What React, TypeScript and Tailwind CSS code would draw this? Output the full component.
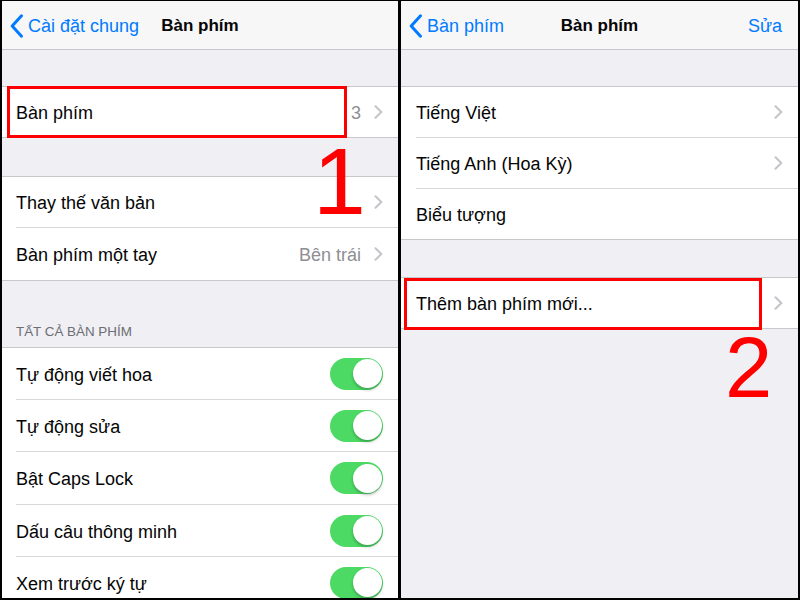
import React from "react";

const FONT = { fontFamily: '"Liberation Sans", Arial, sans-serif' };

function Chevron() {
  return (
    <svg width="9" height="14" viewBox="0 0 9 14" className="shrink-0">
      <path d="M1.5 1.2 L7.3 7 L1.5 12.8" fill="none" stroke="#c4c4c9" strokeWidth="2" strokeLinecap="round" strokeLinejoin="round" />
    </svg>
  );
}

function BackChevron() {
  return (
    <svg width="14" height="24" viewBox="0 0 14 24" className="shrink-0">
      <path d="M11.5 1.8 L2.2 12 L11.5 22.2" fill="none" stroke="#007aff" strokeWidth="3" strokeLinecap="round" strokeLinejoin="round" />
    </svg>
  );
}

function Toggle() {
  return (
    <div className="w-[53px] h-[32px] rounded-full bg-[#4cd964] flex items-center justify-end pr-[1.5px] shrink-0">
      <div className="w-[29px] h-[29px] rounded-full bg-white shadow-[0_2px_3px_rgba(0,0,0,0.25)]" />
    </div>
  );
}

function Row({
  label,
  detail,
  chevron,
  toggle,
  h,
  pl,
}: {
  label: string;
  detail?: string;
  chevron?: boolean;
  toggle?: boolean;
  h: string;
  pl: string;
}) {
  return (
    <div className={`flex items-center bg-white ${h} ${pl} pr-[15px]`}>
      <span className="flex-1 pt-[3px] text-[18px] text-[#050505]">{label}</span>
      {detail && <span className="pt-[3px] text-[18px] text-[#8e8e93] mr-[13px]">{detail}</span>}
      {chevron && <Chevron />}
      {toggle && <Toggle />}
    </div>
  );
}

function Sep({ ml }: { ml: string }) {
  return (
    <div className="bg-white">
      <div className={`h-px bg-[#d8d8dc] ${ml}`} />
    </div>
  );
}

function Nav({ back, title, action }: { back: string; title: string; action?: string }) {
  return (
    <div className="relative h-[49px] pt-[2px] bg-[#f7f7f7] border-b border-[#c8c7cc] flex items-center shrink-0">
      <div className="flex items-center pl-[8px] gap-[4px]">
        <BackChevron />
        <span className="text-[18px] text-[#007aff]">{back}</span>
      </div>
      <div className="absolute inset-0 pt-[2px] flex items-center justify-center pointer-events-none">
        <span className="text-[17px] font-bold text-[#050505]">{title}</span>
      </div>
      {action && (
        <span className="ml-auto pr-[16px] text-[18px] text-[#007aff]">{action}</span>
      )}
    </div>
  );
}

export default function App() {
  return (
    <div className="w-[800px] h-[600px] bg-black flex gap-[3px] pt-[1px] pb-[2px] pl-[2px] pr-[2px]" style={FONT}>
      {/* Left panel */}
      <div className="relative w-[396px] h-full bg-[#efeff4] flex flex-col overflow-hidden">
        <Nav back="Cài đặt chung" title="Bàn phím" />
        <div className="h-[36px] shrink-0" />
        <div className="border-y border-[#c8c7cc]">
          <Row label="Bàn phím" detail="3" chevron h="h-[50px]" pl="pl-[14px]" />
        </div>
        <div className="h-[38px] shrink-0" />
        <div className="border-y border-[#c8c7cc]">
          <Row label="Thay thế văn bản" chevron h="h-[50px]" pl="pl-[14px]" />
          <Sep ml="ml-[14px]" />
          <Row label="Bàn phím một tay" detail="Bên trái" chevron h="h-[52px]" pl="pl-[14px]" />
        </div>
        <div className="h-[66px] shrink-0 flex items-end pl-[14px] pb-[7px]">
          <span className="text-[13.4px] leading-[16px] text-[#6d6d72]">TẤT CẢ BÀN PHÍM</span>
        </div>
        <div className="border-t border-[#c8c7cc]">
          <Row label="Tự động viết hoa" toggle h="h-[51px]" pl="pl-[14px]" />
          <Sep ml="ml-[14px]" />
          <Row label="Tự động sửa" toggle h="h-[51px]" pl="pl-[14px]" />
          <Sep ml="ml-[14px]" />
          <Row label="Bật Caps Lock" toggle h="h-[52px]" pl="pl-[14px]" />
          <Sep ml="ml-[14px]" />
          <Row label="Dấu câu thông minh" toggle h="h-[51px]" pl="pl-[14px]" />
          <Sep ml="ml-[14px]" />
          <Row label="Xem trước ký tự" toggle h="h-[51px]" pl="pl-[14px]" />
        </div>

        {/* Annotation */}
        <div className="absolute left-[5px] top-[85px] w-[340px] h-[52px] border-[3px] border-[#ff0000]" />
        <div className="absolute left-[311px] top-[133px] text-[95px] leading-none text-[#ff0000]">1</div>
      </div>

      {/* Right panel */}
      <div className="relative flex-1 h-full bg-[#efeff4] flex flex-col overflow-hidden">
        <Nav back="Bàn phím" title="Bàn phím" action="Sửa" />
        <div className="h-[36px] shrink-0" />
        <div className="border-y border-[#c8c7cc]">
          <Row label="Tiếng Việt" chevron h="h-[50px]" pl="pl-[15px]" />
          <Sep ml="ml-[15px]" />
          <Row label="Tiếng Anh (Hoa Kỳ)" chevron h="h-[50px]" pl="pl-[15px]" />
          <Sep ml="ml-[15px]" />
          <Row label="Biểu tượng" h="h-[50px]" pl="pl-[15px]" />
        </div>
        <div className="h-[37px] shrink-0" />
        <div className="border-y border-[#c8c7cc]">
          <Row label="Thêm bàn phím mới..." chevron h="h-[50px]" pl="pl-[15px]" />
        </div>

        {/* Annotation */}
        <div className="absolute left-[3px] top-[277px] w-[358px] h-[52px] border-[3px] border-[#ff0000]" />
        <div className="absolute left-[324px] top-[324px] text-[85px] leading-none text-[#ff0000]">2</div>
      </div>
    </div>
  );
}
